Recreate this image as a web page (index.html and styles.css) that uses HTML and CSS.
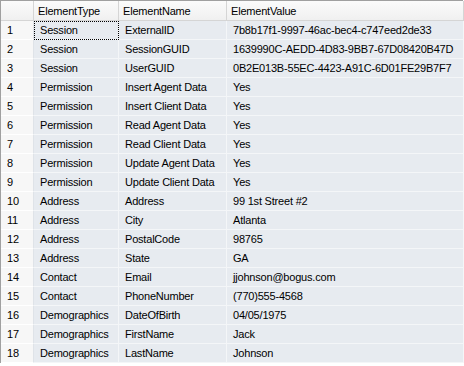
FILE: index.html
```html
<!DOCTYPE html>
<html>
<head>
<meta charset="utf-8">
<link rel="stylesheet" href="styles.css">
</head>
<body>
<div class="grid">
  <div class="hdr corner"></div>
  <div class="hdr">ElementType</div>
  <div class="hdr">ElementName</div>
  <div class="hdr">ElementValue</div>

  <div class="num">1</div><div class="cell focus">Session</div><div class="cell">ExternalID</div><div class="cell">7b8b17f1-9997-46ac-bec4-c747eed2de33</div>
  <div class="num">2</div><div class="cell">Session</div><div class="cell">SessionGUID</div><div class="cell">1639990C-AEDD-4D83-9BB7-67D08420B47D</div>
  <div class="num">3</div><div class="cell">Session</div><div class="cell">UserGUID</div><div class="cell">0B2E013B-55EC-4423-A91C-6D01FE29B7F7</div>
  <div class="num">4</div><div class="cell">Permission</div><div class="cell">Insert Agent Data</div><div class="cell">Yes</div>
  <div class="num">5</div><div class="cell">Permission</div><div class="cell">Insert Client Data</div><div class="cell">Yes</div>
  <div class="num">6</div><div class="cell">Permission</div><div class="cell">Read Agent Data</div><div class="cell">Yes</div>
  <div class="num">7</div><div class="cell">Permission</div><div class="cell">Read Client Data</div><div class="cell">Yes</div>
  <div class="num">8</div><div class="cell">Permission</div><div class="cell">Update Agent Data</div><div class="cell">Yes</div>
  <div class="num">9</div><div class="cell">Permission</div><div class="cell">Update Client Data</div><div class="cell">Yes</div>
  <div class="num">10</div><div class="cell">Address</div><div class="cell">Address</div><div class="cell">99 1st Street #2</div>
  <div class="num">11</div><div class="cell">Address</div><div class="cell">City</div><div class="cell">Atlanta</div>
  <div class="num">12</div><div class="cell">Address</div><div class="cell">PostalCode</div><div class="cell">98765</div>
  <div class="num">13</div><div class="cell">Address</div><div class="cell">State</div><div class="cell">GA</div>
  <div class="num">14</div><div class="cell">Contact</div><div class="cell">Email</div><div class="cell">jjohnson@bogus.com</div>
  <div class="num">15</div><div class="cell">Contact</div><div class="cell">PhoneNumber</div><div class="cell">(770)555-4568</div>
  <div class="num">16</div><div class="cell">Demographics</div><div class="cell">DateOfBirth</div><div class="cell">04/05/1975</div>
  <div class="num">17</div><div class="cell">Demographics</div><div class="cell">FirstName</div><div class="cell">Jack</div>
  <div class="num">18</div><div class="cell">Demographics</div><div class="cell">LastName</div><div class="cell">Johnson</div>
</div>
</body>
</html>
```

FILE: styles.css
```css
html, body {
  margin: 0;
  padding: 0;
  background: #ffffff;
}

body {
  font-family: "Liberation Sans", Arial, sans-serif;
  font-size: 11px;
  letter-spacing: -0.2px;
  color: #000000;
}

.grid {
  display: grid;
  grid-template-columns: 33px 85px 108px 237px;
  grid-template-rows: 20px repeat(18, 19px);
  width: 463px;
  border-top: 1px solid #a0a0a0;
  border-left: 1px solid #a0a0a0;
  box-sizing: border-box;
}

.grid > div {
  box-sizing: border-box;
  display: flex;
  align-items: center;
  white-space: nowrap;
  overflow: hidden;
}

.hdr {
  background: linear-gradient(#fbfbfb, #f0f0f0);
  border-right: 1px solid #d5d5d5;
  border-bottom: 1px solid #d5d5d5;
  padding-left: 4px;
  color: #000000;
}

.hdr.corner {
  padding: 0;
}

.num {
  background: #f7f7f7;
  border-right: 1px solid #dfe3e8;
  border-bottom: 1px solid #ffffff;
  padding-left: 6px;
}

.cell {
  background: #e7ebf0;
  border-right: 1px solid #f4f6f8;
  border-bottom: 1px solid #f4f6f8;
  padding-left: 6px;
}

.cell.focus {
  outline: 1px dotted #000000;
  outline-offset: -1px;
}
```
